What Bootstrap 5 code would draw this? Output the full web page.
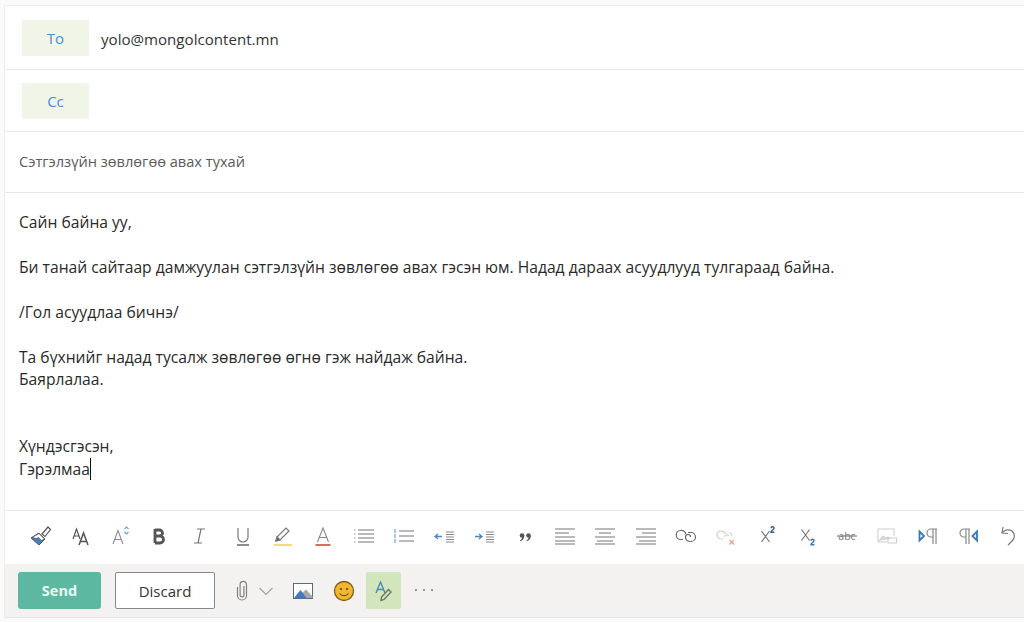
<!doctype html>
<html lang="mn"><head><meta charset="utf-8"><title>Mail</title>
<link href="https://cdn.jsdelivr.net/npm/bootstrap@5.3.0/dist/css/bootstrap.min.css" rel="stylesheet">
<style>
html,body{height:622px;overflow:hidden}
body{background:#fafafa;font-family:"Open Sans","Noto Sans","Liberation Sans",sans-serif;color:#262626;padding:5px 0 0 4px}
.composer{width:1020px;background:#fff;border-left:1px solid #eeedec;border-top:1px solid #eeedec}
.addr-row{height:62px;border-bottom:1px solid #e9e8e7;padding-left:17px}
.addr-row.first{height:64px}
.addr-chip{width:67px;height:36px;background:#f0f5e8;color:#4a8ed6;font-size:15px;font-weight:500;line-height:36px;text-align:center;margin-right:12px}
.addr-val{font-size:15.1px;color:#333;padding-top:3px}
.subj-row{height:61px;border-bottom:1px solid #e9e8e7;padding-left:14px;font-size:14.6px;color:#5a5a5a}
.mail-body{height:317px;padding:18px 0 0 14px;font-size:15.65px;line-height:22.45px;color:#2a2a2a}
.mail-line{height:22.45px;white-space:nowrap}
.caret-bar{display:inline-block;width:1px;height:22px;background:#111;vertical-align:-5px}
.fmt-bar{height:54px;border-top:1px solid #e9e8e7;padding:0 0 3px 16px;overflow:hidden}
.fmt-btn{flex:0 0 40.3px;width:40.3px;height:40px;display:flex;align-items:center;justify-content:center}
.fmt-btn svg{width:24px;height:24px;overflow:visible}
.strike-txt{font:10.500px "Open Sans",sans-serif;fill:#777;stroke:none}
.act-bar{height:54px;background:#f3f2f1;padding-left:13px;border-bottom:1px solid #e6e5e4}
.send-btn{width:83px;height:37px;background:#5cb8a0;color:#eafaf5;border:0;border-radius:3px;font-size:14.5px;font-weight:700;padding:1px 0 0;margin-right:14px}
.send-btn:hover{background:#5cb8a0;color:#eafaf5}
.disc-btn{width:100px;height:37px;background:#fff;border:1px solid #8a8886;border-radius:2px;color:#333;font-size:15px;padding:1px 0 0;margin-right:15px}
.act-ico{display:flex;align-items:center;justify-content:center;height:37px}
.act-ico svg{width:24px;height:24px;overflow:visible}
.act-on{width:35px;background:#d3e5bd;border-radius:2px}
.gap-img{margin-left:13px}.gap-smile{margin-left:17px}.gap-on{margin-left:10px}.gap-more{margin-left:11px}
</style></head><body>
<main class="composer">
 <div class="addr-row first d-flex align-items-center"><div class="addr-chip">To</div><div class="addr-val">yolo@mongolcontent.mn</div></div>
 <div class="addr-row d-flex align-items-center"><div class="addr-chip">Cc</div></div>
 <div class="subj-row d-flex align-items-center">Сэтгэлзүйн зөвлөгөө авах тухай</div>
 <div class="mail-body">
  <div class="mail-line">Сайн байна уу,</div><div class="mail-line"></div>
  <div class="mail-line">Би танай сайтаар дамжуулан сэтгэлзүйн зөвлөгөө авах гэсэн юм. Надад дараах асуудлууд тулгараад байна.</div><div class="mail-line"></div>
  <div class="mail-line">/Гол асуудлаа бичнэ/</div><div class="mail-line"></div>
  <div class="mail-line">Та бүхнийг надад тусалж зөвлөгөө өгнө гэж найдаж байна.</div>
  <div class="mail-line">Баярлалаа.</div><div class="mail-line"></div><div class="mail-line"></div>
  <div class="mail-line">Хүндэсгэсэн,</div>
  <div class="mail-line">Гэрэлмаа<span class="caret-bar"></span></div>
 </div>
 <div class="fmt-bar d-flex align-items-center">
  <div class="fmt-btn"><svg viewBox="0 0 24 24"><path d="M2 14 10 9l6 6-6 6z" fill="#4a7fc4" stroke="#555" stroke-width="1"/><path d="M3 13.500 10 9.500l5.500 5.500-3 1.500-3-3-2 1z" fill="#fff" stroke="#555" stroke-width=".8"/><path d="M13 10l6-7 2.500 2.500L16 12.500z" fill="#fff" stroke="#555" stroke-width="1.200"/></svg></div>
  <div class="fmt-btn"><svg viewBox="0 0 24 24" fill="none" stroke="#555" stroke-width="1.200"><path d="M4 15 7.500 5l3.500 10M5 12h5"/><path d="M10 21l4.500-12L19 21M11.500 17.500h6" stroke-width="1.500"/></svg></div>
  <div class="fmt-btn"><svg viewBox="0 0 24 24" fill="none" stroke="#8c8c8c" stroke-width="1.100"><path d="M3 20 8 6.500 13 20M4.800 15.500h6.400"/><path d="M14.500 5l2-2 2 2M14.500 8l2 2 2-2" stroke="#6a9fd6"/></svg></div>
  <div class="fmt-btn"><svg viewBox="3 0 24 24" fill="none" stroke="#555" stroke-width="2.800"><path d="M8 5v14M8 6h4.500a3 3 0 0 1 0 6H8M8 12h5a3.500 3.500 0 0 1 0 7H8"/></svg></div>
  <div class="fmt-btn"><svg viewBox="3 0 24 24" fill="none" stroke="#777" stroke-width="1.200"><path d="M10 5h8M7 19h8M14 5l-3 14"/></svg></div>
  <div class="fmt-btn"><svg viewBox="0 0 24 24" fill="none" stroke="#777" stroke-width="1.200"><path d="M7 4v9a5 5 0 0 0 10 0V4"/><path d="M6 21h12" stroke-width="1.700"/></svg></div>
  <div class="fmt-btn"><svg viewBox="0 0 24 24" fill="none" stroke="#777" stroke-width="1.200"><path d="M5 17l1-4L15 4l3 3-9 9-4 1z"/><path d="M5 17l4-1-3-3z" fill="#666"/><path d="M3 21h18" stroke="#f0dc78" stroke-width="2"/></svg></div>
  <div class="fmt-btn"><svg viewBox="0 0 24 24" fill="none" stroke="#888" stroke-width="1.100"><path d="M6.500 18 12 4l5.500 14M8.300 13.500h7.400"/><path d="M4.500 21h15" stroke="#d0705f" stroke-width="2"/></svg></div>
  <div class="fmt-btn"><svg viewBox="0 0 24 24" fill="none" stroke="#777" stroke-width="1.200"><path d="M6 6h16M6 10h16M6 14h16M6 18h16"/><path d="M2 6h1.500M2 10h1.500M2 14h1.500M2 18h1.500" stroke="#999"/></svg></div>
  <div class="fmt-btn"><svg viewBox="0 0 24 24" fill="none" stroke="#777" stroke-width="1.100"><path d="M7 7h15M7 12h15M7 17h15"/><path d="M3 5v4M3 10v4M3 15v4" stroke="#6a9fd6"/></svg></div>
  <div class="fmt-btn"><svg viewBox="0 0 24 24" fill="none" stroke="#888" stroke-width="1.100"><path d="M14 8h8M14 10.500h8M14 13h8M14 15.500h8M14 18h8"/><path d="M10 12.500H3M6 10l-3 2.500L6 15" stroke="#4a87c8" stroke-width="1.300"/></svg></div>
  <div class="fmt-btn"><svg viewBox="0 0 24 24" fill="none" stroke="#888" stroke-width="1.100"><path d="M14 8h8M14 10.500h8M14 13h8M14 15.500h8M14 18h8"/><path d="M3 12.500h7M7 10l3 2.500L7 15" stroke="#4a87c8" stroke-width="1.300"/></svg></div>
  <div class="fmt-btn"><svg viewBox="0 0 24 24" fill="#555"><circle cx="9" cy="11.500" r="2.300"/><circle cx="15.500" cy="11.500" r="2.300"/><path d="M11.300 11.500c0 3.500-1.800 5-4 5.800l-.4-1c1.600-.7 2.400-2 2.400-3.800zM17.800 11.500c0 3.500-1.800 5-4 5.800l-.4-1c1.600-.7 2.400-2 2.400-3.800z"/></svg></div>
  <div class="fmt-btn"><svg viewBox="0 0 24 24" fill="none" stroke="#777" stroke-width="1.200"><path d="M2 5h20M2 9h14M2 13h20M2 17h20M2 20h20"/></svg></div>
  <div class="fmt-btn"><svg viewBox="0 0 24 24" fill="none" stroke="#777" stroke-width="1.200"><path d="M2 5h20M6 9h12M2 13h20M4 17h16M2 20h20"/></svg></div>
  <div class="fmt-btn"><svg viewBox="0 0 24 24" fill="none" stroke="#777" stroke-width="1.200"><path d="M2 5h20M8 9h14M2 13h20M5 17h17M2 20h20"/></svg></div>
  <div class="fmt-btn"><svg viewBox="0 0 24 24" fill="none" stroke="#666" stroke-width="1.200"><path d="M9 15.500H7A4.500 4.500 0 0 1 6.500 6.500c2.500-.3 5 1.200 5.500 4"/><path d="M14 8.500h3a4.500 4.500 0 0 1 0 9c-3 0-5.500-1.500-5.500-4.500a2.500 2.500 0 0 1 5 0"/></svg></div>
  <div class="fmt-btn"><svg viewBox="0 0 24 24" fill="none" stroke="#cfcfcf" stroke-width="1.200"><path d="M9 15H7A4 4 0 0 1 7 7c2.500 0 4 1.500 4.500 3"/><path d="M15 8.500a4 4 0 0 1 3 3M10.500 13a2.500 2.500 0 0 1 4.500-1"/><path d="M15.500 16l4.500 4.500M20 16l-4.500 4.500" stroke="#e3a292"/></svg></div>
  <div class="fmt-btn"><svg viewBox="0 0 24 24" fill="none" stroke="#777" stroke-width="1.200"><path d="M7.500 7l8 11M15.500 7l-8 11"/><path d="M17 4.200a1.500 1.500 0 0 1 3 0c0 1.400-3 2.300-3 4h3.400" stroke="#3c5f92" stroke-width="1.500"/></svg></div>
  <div class="fmt-btn"><svg viewBox="0 0 24 24" fill="none" stroke="#777" stroke-width="1.200"><path d="M6.500 5.500l8 11M14.500 5.500l-8 11"/><path d="M16 16.700a1.500 1.500 0 0 1 3 0c0 1.400-3 2.300-3 4h3.400" stroke="#3a78ba" stroke-width="1.500"/></svg></div>
  <div class="fmt-btn"><svg viewBox="0 0 24 24"><text class="strike-txt" x="12" y="15.500" text-anchor="middle">abc</text><path d="M2 12h20" stroke="#777" stroke-width="1.100"/></svg></div>
  <div class="fmt-btn"><svg viewBox="0 0 24 24" fill="none" stroke="#cfcfcf" stroke-width="1.100"><path d="M19 12V5H3v13h9"/><path d="M4 17l4-5 3 2.500 2-1.500 2 2" fill="#d8d8d8"/><rect x="13" y="14" width="8.500" height="5"/></svg></div>
  <div class="fmt-btn"><svg viewBox="0 0 24 24" fill="none" stroke="#888" stroke-width="1.200"><path d="M3.500 7.500v9l4.500-4.500z" fill="#fff" stroke="#3a78ba" stroke-width="1.800"/><path d="M21 5H15a4 4 0 0 0 0 8h2M17 5v15M20 5v15"/></svg></div>
  <div class="fmt-btn"><svg viewBox="0 0 24 24" fill="none" stroke="#888" stroke-width="1.200"><path d="M14 5H8a4 4 0 0 0 0 8h2M10 5v15M13 5v15"/><path d="M21 7.500v9L16.500 12z" fill="#fff" stroke="#3a78ba" stroke-width="1.800"/></svg></div>
  <div class="fmt-btn"><svg viewBox="0 0 24 24" fill="none" stroke="#777" stroke-width="1.200"><path d="M7 3 6 9l6 .5"/><path d="M6.500 8.500C9 5.500 13 5 16 7c3 2.500 3 7 .5 9.500L12 21"/></svg></div>
 </div>
 <div class="act-bar d-flex align-items-center">
  <button class="btn send-btn">Send</button>
  <button class="btn disc-btn">Discard</button>
  <div class="act-ico"><svg viewBox="0 0 24 24" fill="none" stroke="#808080" stroke-width="1.200"><path d="M7.500 8v8.500a4.500 4.500 0 0 0 9 0V5.500a3.200 3.200 0 0 0-6.400 0V16a1.900 1.900 0 0 0 3.800 0V7"/></svg></div>
  <div class="act-ico"><svg viewBox="0 0 24 24" fill="none" stroke="#a0a0a0" stroke-width="1.100"><path d="M5.500 9l6.500 6.500L18.500 9"/></svg></div>
  <div class="act-ico gap-img"><svg viewBox="0 0 24 24"><rect x="2.500" y="4.500" width="19" height="15" fill="#fff" stroke="#5f6b78"/><path d="M15 19l-4-5 4-3.500 6.500 7V19z" fill="#a8a8a8"/><path d="M3 19l6.500-8 6 8z" fill="#3f78c4"/></svg></div>
  <div class="act-ico gap-smile"><svg viewBox="0 0 24 24" fill="none"><circle cx="12" cy="12" r="9.500" fill="#f3b72e" stroke="#7d6020" stroke-width="1.300"/><circle cx="9" cy="10" r="1.100" fill="#5a4514"/><circle cx="15" cy="10" r="1.100" fill="#5a4514"/><path d="M7.500 14.500c2 3 7 3 9 0" stroke="#5a4514" stroke-width="1.100"/></svg></div>
  <div class="act-ico act-on gap-on"><svg viewBox="0 0 24 24" fill="none" stroke="#4a8bb0" stroke-width="1.400"><path d="M4 14 8.500 3 13 14M5.500 10.500h6"/><path d="M9 21.500l.5-3.500 7-7.500 2.500 2.500-7 7.500z" stroke="#6a7a60"/></svg></div>
  <div class="act-ico gap-more"><svg viewBox="0 0 24 24" fill="#777"><circle cx="4" cy="11" r="1"/><circle cx="12" cy="11" r="1"/><circle cx="20" cy="11" r="1"/></svg></div>
 </div>
</main>
<script src="https://cdn.jsdelivr.net/npm/bootstrap@5.3.0/dist/js/bootstrap.bundle.min.js"></script>
</body></html>
